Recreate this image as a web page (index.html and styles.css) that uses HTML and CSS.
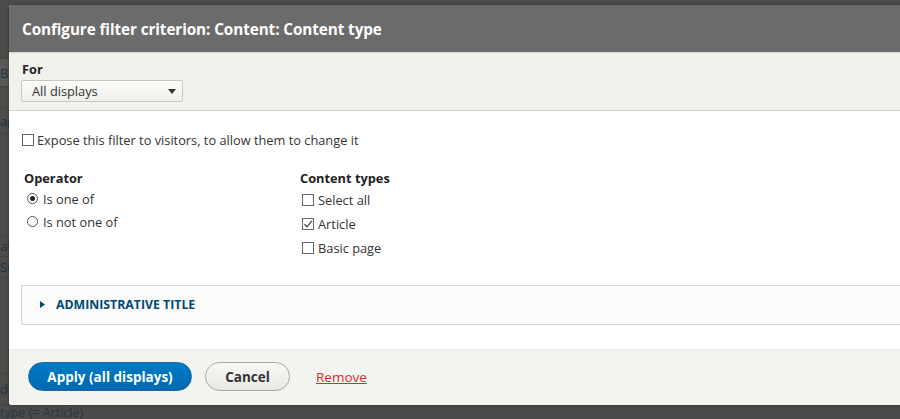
FILE: index.html
```html
<!DOCTYPE html>
<html>
<head>
<meta charset="utf-8">
<link rel="stylesheet" href="styles.css">
</head>
<body>
<div class="page">
  <div class="bg-row r1"></div>
  <div class="bg-row r2"><span>Bl</span></div>
  <div class="bg-row r3"></div>
  <div class="bg-row r4"><span>ag</span></div>
  <div class="bg-row r5"></div>
  <div class="bg-row r6"><span>att</span></div>
  <div class="bg-row r7"><span>Se</span></div>
  <div class="bg-row r8"></div>
  <div class="bg-row r9"><span>d</span></div>
  <div class="bg-row r10"><span>type (= Article)</span></div>
</div>

<div class="dialog">
  <div class="titlebar">
    <h1 class="title">Configure filter criterion: Content: Content type</h1>
  </div>
  <div class="header">
    <div class="field-label">For</div>
    <div class="select">
      <span>All displays</span>
      <svg class="caret" width="8" height="5" viewBox="0 0 8 5"><path d="M0 0H8L4 5Z" fill="#333"/></svg>
    </div>
  </div>
  <div class="content">
    <label class="check-row expose">
      <span class="cb"></span>
      <span>Expose this filter to visitors, to allow them to change it</span>
    </label>
    <div class="columns">
      <div class="col col-op">
        <div class="col-title">Operator</div>
        <label class="radio-row"><span class="rb on"></span><span>Is one of</span></label>
        <label class="radio-row"><span class="rb"></span><span>Is not one of</span></label>
      </div>
      <div class="col col-types">
        <div class="col-title">Content types</div>
        <label class="type-row"><span class="cb"></span><span>Select all</span></label>
        <label class="type-row"><span class="cb checked"><svg width="10" height="10" viewBox="0 0 10 10"><path d="M1.5 5.2L4 7.8L8.8 1.8" fill="none" stroke="#444" stroke-width="1.3"/></svg></span><span>Article</span></label>
        <label class="type-row"><span class="cb"></span><span>Basic page</span></label>
      </div>
    </div>
    <div class="details">
      <svg class="tri" width="5" height="7" viewBox="0 0 5 7"><path d="M0 0L5 3.5L0 7Z" fill="#004875"/></svg>
      <span class="summary">ADMINISTRATIVE TITLE</span>
    </div>
  </div>
  <div class="footer">
    <button class="btn primary">Apply (all displays)</button>
    <button class="btn secondary">Cancel</button>
    <a class="remove" href="#">Remove</a>
  </div>
</div>
</body>
</html>
```
FILE: styles.css
```css
html, body {
  margin: 0;
  padding: 0;
}
body {
  width: 900px;
  height: 419px;
  overflow: hidden;
  background: #4b4b4a;
  font-family: "Open Sans", "DejaVu Sans", sans-serif;
  position: relative;
}
.page {
  display: flex;
  flex-direction: column;
}
.bg-row {
  font-size: 13px;
  color: #1e3446;
  border-bottom: 1px solid #444;
  display: flex;
  align-items: center;
  white-space: nowrap;
}
.r1 { height: 58px; background: #4c4c4b; }
.r2 { height: 27px; background: #595958; }
.r3 { height: 21px; background: #4d4d4c; }
.r4 { height: 24px; background: #4d4d4c; }
.r5 { height: 101px; background: #4d4d4c; }
.r6 { height: 20px; background: #4d4d4c; }
.r7 { height: 20px; background: #4d4d4c; }
.r8 { height: 95px; background: #4d4d4c; }
.r9 { height: 30px; background: #4d4d4c; }
.r10 {
  height: 14px;
  line-height: 13px;
  font-size: 12.5px;
  background: #4b4b4a;
  color: #243848;
  border-bottom: none;
}

.dialog {
  position: absolute;
  left: 9px;
  top: 5px;
  width: 920px;
  height: 400px;
  display: flex;
  flex-direction: column;
  background: #fff;
  border-radius: 3px 0 0 3px;
  overflow: hidden;
  box-shadow: 0 0 4px rgba(0,0,0,0.3);
}
.titlebar {
  height: 47px;
  background: #6b6b6b;
  display: flex;
  align-items: center;
  padding-left: 13px;
  flex-shrink: 0;
}
.title {
  margin: 0;
  color: #fff;
  font-size: 15.3px;
  font-weight: 700;
  letter-spacing: -0.1px;
}
.header {
  background: #f2f2ed;
  border-top: 1px solid #d6d6d2;
  border-bottom: 1px solid #cfcfca;
  padding-left: 12px;
  box-sizing: border-box;
  height: 59px;
  flex-shrink: 0;
}
.field-label {
  font-size: 12.8px;
  font-weight: 700;
  color: #222;
  margin-top: 8px;
  margin-left: 1px;
  line-height: 16px;
}
.select {
  margin-top: 3px;
  width: 162px;
  height: 22px;
  box-sizing: border-box;
  border: 1px solid #c8c8c3;
  border-radius: 2px;
  background: linear-gradient(#fcfcfa, #eeeeea);
  display: flex;
  align-items: center;
  justify-content: space-between;
  padding: 0 6px 0 10px;
  font-size: 12.8px;
  color: #333;
}
.content {
  flex: 1;
  padding: 20px 0 0 12px;
}
.check-row, .radio-row, .type-row {
  display: flex;
  align-items: center;
  font-size: 12.8px;
  color: #333;
}
.expose {
  height: 18px;
  margin-left: 1px;
}
.cb {
  width: 12px;
  height: 12px;
  box-sizing: border-box;
  border: 1px solid #666;
  background: #fff;
  margin-right: 3px;
  display: flex;
  align-items: center;
  justify-content: center;
  flex-shrink: 0;
}
.columns {
  display: flex;
  margin-top: 20px;
}
.col-title {
  font-size: 12.8px;
  font-weight: 700;
  color: #222;
  line-height: 18px;
}
.col-op {
  width: 279px;
  padding-left: 3px;
  box-sizing: border-box;
}
.radio-row {
  height: 23px;
  margin-left: 3px;
}
.rb {
  width: 11px;
  height: 11px;
  box-sizing: border-box;
  border: 1px solid #555;
  border-radius: 50%;
  background: #fff;
  margin-right: 5px;
  position: relative;
  flex-shrink: 0;
}
.rb.on::after {
  content: "";
  position: absolute;
  left: 2px;
  top: 2px;
  width: 5px;
  height: 5px;
  border-radius: 50%;
  background: #222;
}
.col-types .col-title {
  margin-bottom: 1px;
}
.type-row {
  height: 24px;
  margin-left: 2px;
}
.type-row .cb {
  margin-right: 4px;
}
.details {
  margin-top: 25px;
  height: 40px;
  box-sizing: border-box;
  border: 1px solid #d4d4d0;
  border-right: none;
  border-radius: 2px 0 0 2px;
  background: #fbfbf9;
  display: flex;
  align-items: center;
  padding-left: 18px;
  padding-bottom: 2px;
}
.tri {
  margin-right: 11px;
}
.summary {
  font-size: 12.3px;
  font-weight: 700;
  color: #004875;
}
.footer {
  height: 56px;
  background: #f3f3ef;
  border-top: 1px solid #ecece8;
  box-sizing: border-box;
  flex-shrink: 0;
  display: flex;
  align-items: center;
  padding-left: 19px;
  padding-bottom: 2px;
}
.btn {
  height: 29px;
  border-radius: 15px;
  font-family: "Open Sans", "DejaVu Sans", sans-serif;
  font-size: 13.5px;
  font-weight: 700;
  cursor: pointer;
  box-sizing: border-box;
}
.primary {
  width: 164px;
  background: linear-gradient(#007bc6, #0069b0);
  border: 1px solid #1d66a0;
  color: #fff;
}
.secondary {
  width: 85px;
  margin-left: 13px;
  background: linear-gradient(#f7f7f4, #e9e9e4);
  border: 1px solid #a8a8a4;
  color: #333;
}
.remove {
  margin-left: 26px;
  font-size: 13.5px;
  color: #d0312d;
  text-decoration: underline;
}
```
